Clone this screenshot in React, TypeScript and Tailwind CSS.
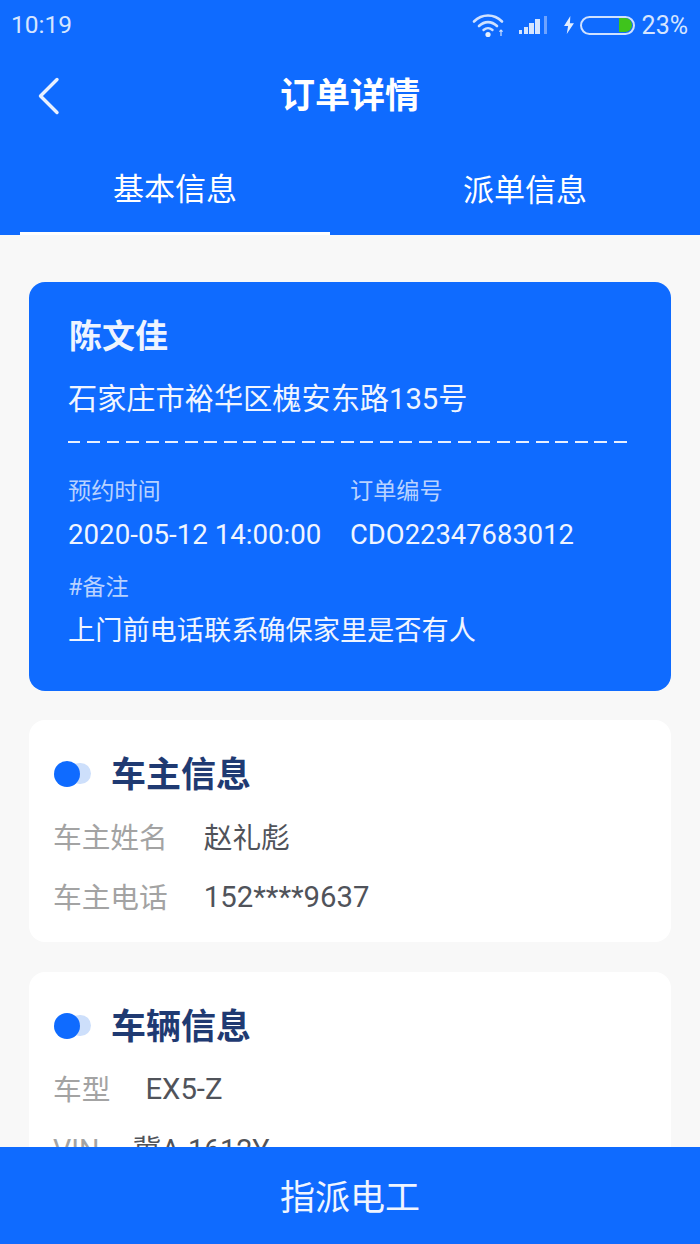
import React from "react";

function Wifi() {
  return (
    <svg width="36" height="26" viewBox="0 0 36 26" fill="none" className="block">
      <path d="M2 9.5C10 1.5 22 1.5 30 9.5" stroke="#cfe1ff" strokeWidth="2.6" strokeLinecap="round" />
      <path d="M7 14C12.5 8.8 19.5 8.8 25 14" stroke="#cfe1ff" strokeWidth="2.6" strokeLinecap="round" />
      <path d="M11.5 18C14.5 15.5 17.5 15.5 20.5 18" stroke="#cfe1ff" strokeWidth="2.4" strokeLinecap="round" />
      <circle cx="16" cy="22.5" r="2.6" fill="#e6f0ff" />
      <path d="M29 24V18M27.4 19.6L29 18L30.6 19.6" stroke="#cfe1ff" strokeWidth="1.2" />
    </svg>
  );
}

function Signal() {
  return (
    <svg width="30" height="20" viewBox="0 0 30 20" className="block">
      <rect x="1" y="15" width="3" height="4" fill="#d5e5ff" />
      <rect x="6" y="12" width="4" height="7" fill="#d5e5ff" />
      <rect x="11" y="8" width="5" height="11" fill="#d5e5ff" />
      <rect x="17" y="4" width="5" height="15" fill="#d5e5ff" />
      <rect x="26" y="1" width="3" height="18" fill="#6ea3ff" />
    </svg>
  );
}

function Bolt() {
  return (
    <svg width="12" height="18" viewBox="0 0 13 20" className="block">
      <path d="M8 0L1 11H5.5L4 20L12 8H7.5L8 0Z" fill="#e2edff" />
    </svg>
  );
}

function Battery() {
  return (
    <div className="flex h-[19px] w-[55px] items-center justify-end rounded-full border-2 border-[#cfe1ff] pr-[1px]">
      <div className="h-[14px] w-[13px] rounded-r-full rounded-l-[3px] bg-[#3fc41c]" />
    </div>
  );
}

function Dot() {
  return (
    <div className="relative mb-[3px] h-[26px] w-[38px] shrink-0">
      <div className="absolute left-[15px] top-[2px] h-[21px] w-[22px] rounded-full bg-[#cddffb]" />
      <div className="absolute left-0 top-0 h-[26px] w-[26px] rounded-full bg-[#0f6bff]" />
    </div>
  );
}

function Row({ label, value, gap, valueSize }: { label: string; value: string; gap: string; valueSize: string }) {
  return (
    <div className={`-ml-[1px] flex h-[60px] items-center ${gap} whitespace-nowrap leading-none`}>
      <span className="text-[28.7px] text-[#a3a3a3]">{label}</span>
      <span className={`${valueSize} text-[#50535a]`}>{value}</span>
    </div>
  );
}

function SectionTitle({ children }: { children: React.ReactNode }) {
  return (
    <div className="flex h-[46px] items-center gap-[19px]">
      <Dot />
      <span className="text-[35px] font-bold leading-none text-[#1f3a72]">{children}</span>
    </div>
  );
}

export default function App() {
  return (
    <div
      className="flex h-[1244px] w-[700px] flex-col overflow-hidden bg-[#f8f8f8]"
      style={{ fontFamily: 'Roboto, "Noto Sans CJK SC", sans-serif' }}
    >
      <header className="flex h-[235px] shrink-0 flex-col bg-[#0f6bff] text-white">
        <div className="flex h-[48px] items-center justify-between pl-[11px] pr-[12px] pt-[2px]">
          <span className="text-[24.5px] leading-none text-[#d5e5ff]">10:19</span>
          <div className="flex items-center">
            <Wifi />
            <div className="ml-[10px]">
              <Signal />
            </div>
            <div className="ml-[15px]">
              <Bolt />
            </div>
            <div className="ml-[5px]">
              <Battery />
            </div>
            <span className="ml-[7px] text-[25px] leading-none text-[#d5e5ff]">23%</span>
          </div>
        </div>
        <div className="relative flex h-[96px] items-center justify-center">
          <svg width="24" height="38" viewBox="0 0 24 38" fill="none" className="absolute left-[37px] top-[29px]">
            <path d="M20 2.5L3.5 19L20 35.5" stroke="#e8f0ff" strokeWidth="3.4" strokeLinecap="round" strokeLinejoin="round" />
          </svg>
          <span className="text-[35px] font-bold leading-none">订单详情</span>
        </div>
        <div className="flex flex-1 px-[20px]">
          <div className="flex w-[310px] items-center justify-center border-b-[3px] border-white pt-[3px] text-[31px] leading-none">
            基本信息
          </div>
          <div className="flex flex-1 items-center justify-center pl-[40px] pt-[1px] text-[31px] leading-none">
            <span>派单信息</span>
          </div>
        </div>
      </header>

      <main className="flex min-h-0 flex-1 flex-col overflow-hidden px-[29px] pt-[47px]">
        <section className="h-[409px] shrink-0 rounded-[16px] bg-[#0f6bff] pl-[40px] pr-[43px] pt-[35px] text-white">
          <div className="text-[33px] font-bold leading-[40px] text-[#eef4ff]">陈文佳</div>
          <div className="-ml-[1px] mt-[22px] whitespace-nowrap text-[29.2px] leading-[40px] text-[#f0f5ff]">石家庄市裕华区槐安东路135号</div>
          <div className="-ml-[1px] mt-[22px] h-[2px] bg-[repeating-linear-gradient(90deg,#e8f0ff_0,#e8f0ff_12.5px,transparent_12.5px,transparent_19.5px)]" />
          <div className="-ml-[1px] mt-[33px] grid grid-cols-[282px_1fr]">
            <div className="whitespace-nowrap">
              <div className="text-[23.2px] leading-[30px] text-[#b8d2ff]">预约时间</div>
              <div className="mt-[13px] text-[27.7px] leading-[32px] text-[#f0f5ff]">2020-05-12 14:00:00</div>
            </div>
            <div className="whitespace-nowrap">
              <div className="text-[23.2px] leading-[30px] text-[#b8d2ff]">订单编号</div>
              <div className="mt-[13px] text-[27.4px] leading-[32px] text-[#f0f5ff]">CDO22347683012</div>
            </div>
          </div>
          <div className="-ml-[1px] mt-[21px] text-[23.2px] leading-[30px] text-[#b8d2ff]">#备注</div>
          <div className="-ml-[1px] mt-[11px] whitespace-nowrap text-[27.2px] leading-[36px] text-[#f0f5ff]">上门前电话联系确保家里是否有人</div>
        </section>

        <section className="mt-[29px] h-[222px] shrink-0 rounded-[16px] bg-white pl-[25px] pt-[32px]">
          <SectionTitle>车主信息</SectionTitle>
          <div className="mt-[10px]">
            <Row label="车主姓名" value="赵礼彪" gap="gap-[36px]" valueSize="text-[28.7px]" />
            <Row label="车主电话" value="152****9637" gap="gap-[36px]" valueSize="text-[29.3px]" />
          </div>
        </section>

        <section className="mt-[30px] h-[300px] shrink-0 rounded-[16px] bg-white pl-[25px] pt-[32px]">
          <SectionTitle>车辆信息</SectionTitle>
          <div className="mt-[10px]">
            <Row label="车型" value="EX5-Z" gap="gap-[35px]" valueSize="text-[29.3px]" />
            <Row label="VIN" value="冀A-1612Y" gap="gap-[33px]" valueSize="text-[28.7px]" />
          </div>
        </section>
      </main>

      <footer className="flex h-[97px] shrink-0 items-center justify-center bg-[#0f6bff] pt-[5px] text-[35px] leading-none text-[#f0f5ff]">
        指派电工
      </footer>
    </div>
  );
}
